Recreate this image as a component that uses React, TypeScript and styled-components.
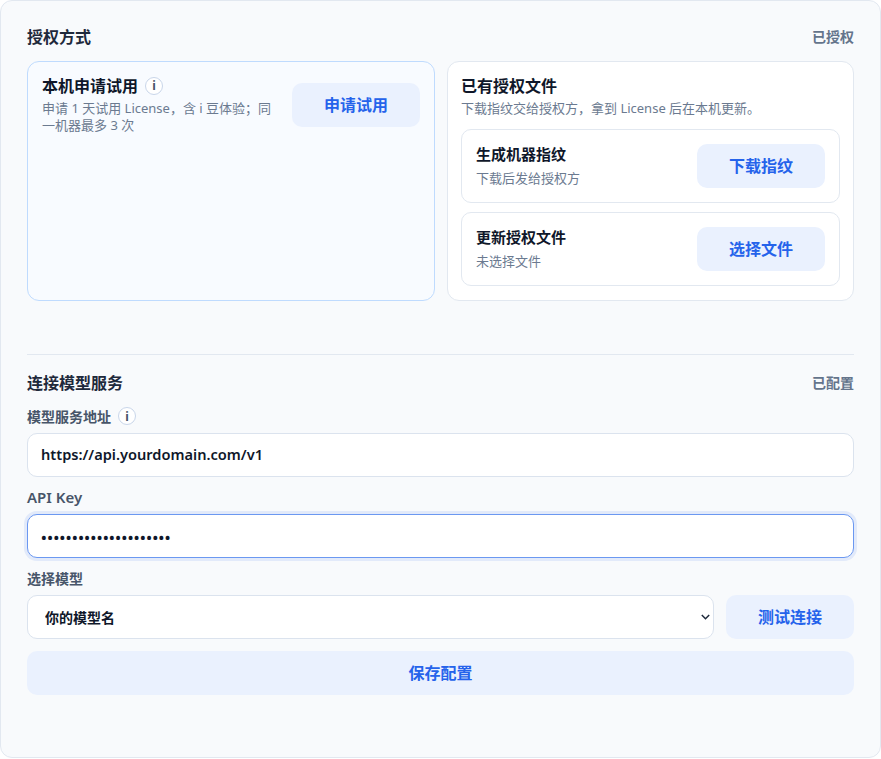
import styled, { createGlobalStyle } from "styled-components";

const GlobalStyle = createGlobalStyle`
  * {
    box-sizing: border-box;
  }

  html,
  body {
    margin: 0;
    background: #fff;
  }

  body {
    font-family: "Noto Sans", "Noto Sans CJK SC", sans-serif;
    color: #1e293b;
  }
`;

const Panel = styled.main`
  width: 881px;
  height: 758px;
  padding: 25px 26px 0;
  background: #f8fafc;
  border: 1px solid #e2e8f0;
  border-radius: 12px;
`;

const SectionHead = styled.div`
  display: flex;
  align-items: center;
  justify-content: space-between;
  height: 22px;
  margin-bottom: 13px;
`;

const SectionTitle = styled.h2`
  margin: 0;
  font-size: 16px;
  line-height: 22px;
  font-weight: 600;
  color: #1e293b;
`;

const Status = styled.span`
  font-size: 14px;
  line-height: 20px;
  font-weight: 600;
  color: #64748b;
`;

const CardGrid = styled.div`
  display: grid;
  grid-template-columns: 408px 407px;
  gap: 12px;
  height: 239px;
`;

const Card = styled.section<{ $accent?: boolean }>`
  padding: ${({ $accent }) => ($accent ? "14px" : "14px 13px")};
  background: ${({ $accent }) => ($accent ? "#f8fbff" : "#fff")};
  border: 1px solid ${({ $accent }) => ($accent ? "#bfdbfe" : "#e2e8f0")};
  border-radius: 12px;
`;

const TrialRow = styled.div`
  display: flex;
  gap: 12px;
  align-items: flex-start;
  justify-content: space-between;
`;

const TrialText = styled.div`
  width: 238px;
`;

const CardTitle = styled.h3`
  display: flex;
  align-items: center;
  gap: 7px;
  margin: 0 0 4px;
  font-size: 16px;
  line-height: 20px;
  font-weight: 600;
  color: #0f172a;
`;

const Hint = styled.p`
  margin: 0;
  font-size: 13px;
  line-height: 17px;
  color: #6b7a90;
`;

const InfoDot = styled.span`
  display: inline-flex;
  align-items: center;
  justify-content: center;
  width: 18px;
  height: 18px;
  font-size: 12px;
  font-weight: 700;
  color: #475569;
  background: #fff;
  border: 1px solid #c9d6ea;
  border-radius: 50%;
`;

const FileHead = styled.div`
  margin-bottom: 12px;
`;

const FileRows = styled.div`
  display: flex;
  flex-direction: column;
  gap: 9px;
`;

const FileRow = styled.div`
  display: flex;
  align-items: center;
  justify-content: space-between;
  height: 74px;
  padding: 0 14px;
  border: 1px solid #e2e8f0;
  border-radius: 10px;
`;

const RowText = styled.div`
  padding-bottom: 2px;
`;

const RowTitle = styled.div`
  margin-bottom: 6px;
  font-size: 15px;
  line-height: 20px;
  font-weight: 600;
  color: #0f172a;
`;

const SoftButton = styled.button<{ $wide?: boolean; $top?: number }>`
  flex: none;
  width: ${({ $wide }) => ($wide ? "100%" : "128px")};
  height: 44px;
  margin-top: ${({ $top }) => $top ?? 0}px;
  padding: 0 0 2px;
  font-family: inherit;
  font-size: 16px;
  font-weight: 600;
  color: #2563eb;
  background: #eaf1fe;
  border: 0;
  border-radius: 10px;
  cursor: pointer;
`;

const Divider = styled.hr`
  height: 1px;
  margin: 54px 0 17px;
  background: #e2e8f0;
  border: 0;
`;

const FieldLabel = styled.label<{ $latin?: boolean }>`
  display: flex;
  align-items: center;
  gap: 7px;
  height: 18px;
  margin-bottom: 8px;
  font-size: ${({ $latin }) => ($latin ? "15px" : "14px")};
  font-weight: 600;
  color: #475569;
`;

const TextInput = styled.input`
  display: block;
  width: 100%;
  height: 44px;
  margin-bottom: 11px;
  padding: 0 13px 2px;
  font-family: inherit;
  font-size: 14.6px;
  font-weight: 600;
  color: #0f172a;
  background: #fff;
  border: 1px solid #dbe3ee;
  border-radius: 10px;
  outline: none;
`;

const KeyInput = styled(TextInput)`
  padding: 2px 13px 0;
  font-size: 15px;
  letter-spacing: 0.55px;
  border-color: #6b98f1;
  box-shadow: 0 0 0 3px rgba(37, 99, 235, 0.1);
`;

const ModelRow = styled.div`
  display: flex;
  gap: 12px;
  margin: 1px 0 12px;
`;

const SelectBox = styled.div`
  position: relative;
  flex: 1;
  min-width: 0;
`;

const ModelSelect = styled.select`
  width: 100%;
  height: 44px;
  padding: 0 17px;
  appearance: none;
  font-family: inherit;
  font-size: 14px;
  font-weight: 600;
  color: #0f172a;
  background: #fff;
  border: 1px solid #dbe3ee;
  border-radius: 10px;
  outline: none;
`;

const Chevron = styled.svg`
  position: absolute;
  top: 19px;
  right: 4px;
  width: 9px;
  height: 6px;
  fill: none;
  stroke: #1e293b;
  stroke-width: 1.5;
  pointer-events: none;
`;

export default function App() {
  return (
    <>
      <GlobalStyle />
      <Panel>
        <SectionHead>
          <SectionTitle>授权方式</SectionTitle>
          <Status>已授权</Status>
        </SectionHead>

        <CardGrid>
          <Card $accent>
            <TrialRow>
              <TrialText>
                <CardTitle>
                  本机申请试用
                  <InfoDot>i</InfoDot>
                </CardTitle>
                <Hint>申请 1 天试用 License，含 i 豆体验；同一机器最多 3 次</Hint>
              </TrialText>
              <SoftButton type="button" $top={7}>
                申请试用
              </SoftButton>
            </TrialRow>
          </Card>

          <Card>
            <FileHead>
              <CardTitle>已有授权文件</CardTitle>
              <Hint>下载指纹交给授权方，拿到 License 后在本机更新。</Hint>
            </FileHead>
            <FileRows>
              <FileRow>
                <RowText>
                  <RowTitle>生成机器指纹</RowTitle>
                  <Hint>下载后发给授权方</Hint>
                </RowText>
                <SoftButton type="button">下载指纹</SoftButton>
              </FileRow>
              <FileRow>
                <RowText>
                  <RowTitle>更新授权文件</RowTitle>
                  <Hint>未选择文件</Hint>
                </RowText>
                <SoftButton type="button">选择文件</SoftButton>
              </FileRow>
            </FileRows>
          </Card>
        </CardGrid>

        <Divider />

        <SectionHead>
          <SectionTitle>连接模型服务</SectionTitle>
          <Status>已配置</Status>
        </SectionHead>

        <FieldLabel>
          模型服务地址
          <InfoDot>i</InfoDot>
        </FieldLabel>
        <TextInput defaultValue="https://api.yourdomain.com/v1" />

        <FieldLabel $latin>API Key</FieldLabel>
        <KeyInput type="password" defaultValue="sk-0123456789abcdefgh" />

        <FieldLabel>选择模型</FieldLabel>
        <ModelRow>
          <SelectBox>
            <ModelSelect defaultValue="model">
              <option value="model">你的模型名</option>
            </ModelSelect>
            <Chevron viewBox="0 0 9 6">
              <path d="M0.8 1l3.7 3.7L8.2 1" />
            </Chevron>
          </SelectBox>
          <SoftButton type="button">测试连接</SoftButton>
        </ModelRow>

        <SoftButton $wide type="button">
          保存配置
        </SoftButton>
      </Panel>
    </>
  );
}
